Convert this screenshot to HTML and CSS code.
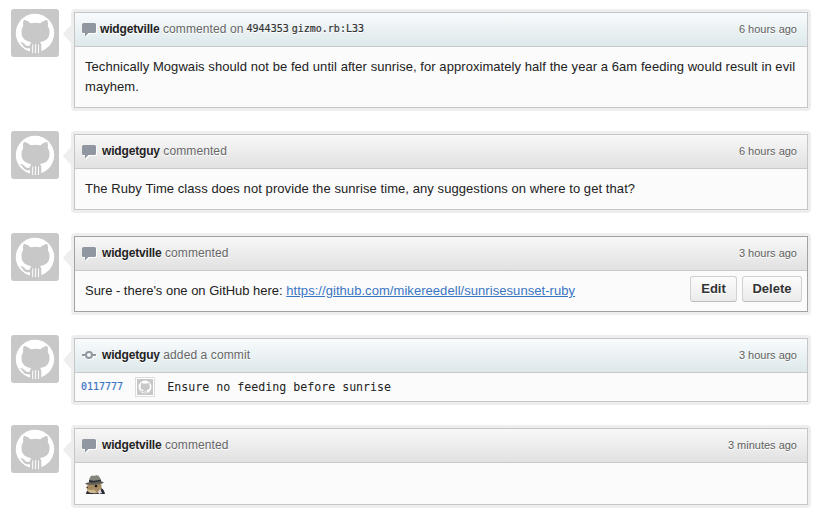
FILE: index.html
```
<!DOCTYPE html>
<html lang="en">
<head>
<meta charset="utf-8">
<title>Discussion</title>
<link rel="stylesheet" href="styles.css">
</head>
<body>
<svg class="defs" width="0" height="0" aria-hidden="true">
  <symbol id="cat" viewBox="0 0 48 48">
    <rect width="48" height="48" fill="#c8c8c8"/>
    <circle cx="24" cy="24" r="19.2" fill="#fff"/>
    <path fill="#c8c8c8" d="M12.500 11.500Q13 10.600 14 11q3 .8 5.700 3.200 4.800-1 9.600 0Q32 11.800 35 11q1-.4 1.500.5 1 3 .3 5.600Q38.500 19.500 38.500 23c0 6.500-3.700 9.200-9.500 10 1.200 1.200 1.300 2.600 1.300 4.200v6H19v-4c-3.700.6-5.700-.5-7-2.700-.8-1.500-1.900-2.500-3.400-3.100 2.500-.4 4 .5 5.300 2.200 1.300 1.500 2.900 1.700 5.100 1 .1-1.400.4-2.500 1.300-3.600C14.500 32.300 10.500 29.500 10.500 23q0-3.500 1.700-5.900-.7-2.600.3-5.600z"/>
    <path stroke="#fff" d="M21.700 35.500v8.500M24.600 35v9M27.500 35.500v8.500"/>
  </symbol>
  <symbol id="bubble" viewBox="0 0 14 14">
    <path fill="#9097a0" d="M1.500 0h11Q14 0 14 1.500v7q0 1.500-1.500 1.500H6.500L3 13.500V10H1.500Q0 10 0 8.500v-7Q0 0 1.500 0z"/>
  </symbol>
</svg>
<main class="thread">
  <article class="item">
    <svg class="avatar"><use href="#cat"/></svg>
    <div class="frame"><div class="box">
      <header class="head blue"><svg class="icon tight"><use href="#bubble"/></svg><b>widgetville</b><span class="action">commented on</span><code>4944353</code><code>gizmo.rb:L33</code><time>6 hours ago</time></header>
      <div class="body"><p>Technically Mogwais should not be fed until after sunrise, for approximately half the year a 6am feeding would result in evil<br>mayhem.</p></div>
    </div></div>
  </article>
  <article class="item">
    <svg class="avatar"><use href="#cat"/></svg>
    <div class="frame"><div class="box">
      <header class="head"><svg class="icon"><use href="#bubble"/></svg><b>widgetguy</b><span class="action">commented</span><time>6 hours ago</time></header>
      <div class="body"><p class="question">The Ruby Time class does not provide the sunrise time, any suggestions on where to get that?</p></div>
    </div></div>
  </article>
  <article class="item">
    <svg class="avatar"><use href="#cat"/></svg>
    <div class="frame"><div class="box active">
      <header class="head"><svg class="icon"><use href="#bubble"/></svg><b>widgetville</b><span class="action">commented</span><time>3 hours ago</time></header>
      <div class="body with-actions"><p>Sure - there's one on GitHub here: <a href="https://github.com/mikereedell/sunrisesunset-ruby">https://github.com/mikereedell/sunrisesunset-ruby</a></p>
        <div class="actions"><button class="edit">Edit</button><button class="delete">Delete</button></div>
      </div>
    </div></div>
  </article>
  <article class="item">
    <svg class="avatar"><use href="#cat"/></svg>
    <div class="frame"><div class="box">
      <header class="head blue"><svg class="icon" viewBox="0 0 14 14"><path d="M0 6h4M10 6h4" stroke="#9097a0" stroke-width="2"/><circle cx="7" cy="6" r="3" fill="none" stroke="#9097a0" stroke-width="2"/></svg><b>widgetguy</b><span class="action">added a commit</span><time>3 hours ago</time></header>
      <div class="commit"><a class="sha" href="#">0117777</a><svg class="mini"><use href="#cat"/></svg><span>Ensure no feeding before sunrise</span></div>
    </div></div>
  </article>
  <article class="item">
    <svg class="avatar"><use href="#cat"/></svg>
    <div class="frame"><div class="box">
      <header class="head"><svg class="icon"><use href="#bubble"/></svg><b>widgetville</b><span class="action">commented</span><time>3 minutes ago</time></header>
      <div class="body emoji-body">
        <svg class="emoji" viewBox="0 0 20 20">
          <path d="M1 19q0-3 3-4l12-2q3 1 4 6z" fill="#2c2b3a"/>
          <path d="M3 9.500q-2 2.500-1 5.500 3 3 7 3.500l5-.5q4-4 2-9.500L5 8z" fill="#a58a62"/>
          <path d="M2 14q4 1.500 7 .5l3 3.500H6q-4-1-4-4z" fill="#cdb990"/>
          <path d="M15 14l2 4-3 1-1-2z" fill="#dedae0"/>
          <circle cx="11" cy="11" r="1.300" fill="#151210"/>
          <circle cx="2.200" cy="12.500" r=".8" fill="#3e3028"/>
          <path d="M4 7q0-5.500 3-6.500 2 .6 4-.3Q15-.2 16 6z" fill="#85857d"/>
          <path d="M4 5q6 1.500 12-.5V7Q10 9.500 4 7.500z" fill="#2d2e31"/>
          <path d="M0 8.500q2-1 4-1.200 6 .7 12-1.300l3 1.500Q17 9 14 9.200 7 10 2 9.700z" fill="#60605a"/>
        </svg>
      </div>
    </div></div>
  </article>
</main>
</body>
</html>
```
FILE: styles.css
```
* { box-sizing: border-box; }
body { margin: 0; background: #fff; font: 13px/20px "Liberation Sans", Arial, sans-serif; color: #222; }
.defs { display: block; }
.thread { display: flex; flex-direction: column; gap: 20px; padding: 9px 8px 0 11px; }
.item { display: flex; align-items: flex-start; gap: 12px; }
.avatar { width: 48px; height: 48px; border-radius: 3px; flex: none; }
.frame { flex: 1; border: 3px solid #eee; border-radius: 4px; position: relative; }
.frame::before { content: ""; position: absolute; left: -11px; top: 13px; border: 9px solid transparent; border-right: 8px solid #eee; border-left: 0; }
.box { border: 1px solid #c6c6c8; background: #fbfbfb; }
.box.active { border-color: #a2a2a2; }
.head { display: flex; align-items: center; height: 34px; padding: 0 10px 2px 7px; border-bottom: 1px solid #c9c9cb; background: linear-gradient(#f8f8f8, #e1e1e1); font-size: 12px; text-shadow: 0 1px 0 #fff; white-space: nowrap; }
.head.blue { background: linear-gradient(#f8fbfc, #dde8eb); }
.icon { width: 14px; height: 14px; margin: 3px 6px 0 0; flex: none; filter: drop-shadow(1px 1px 0 #fff); }
.icon.tight { margin-right: 4px; }
.head b { color: #222; letter-spacing: -0.17px; }
.action { margin-left: 3.5px; color: #666; letter-spacing: 0.1px; }
.head code { margin-left: 3px; font: 10px/20px "DejaVu Sans Mono", monospace; color: #333; -webkit-text-stroke: 0.2px #333; }
time { margin-left: auto; font-size: 11px; color: #606060; }
.body { padding: 10px; }
.body p { margin: 0; white-space: nowrap; letter-spacing: 0.062px; }
.body .question { letter-spacing: 0.073px; }
a { color: #3a75c4; }
.body.with-actions { display: flex; justify-content: space-between; padding: 5px 5px 9px 10px; }
.body.with-actions p { padding-top: 5px; letter-spacing: -0.02px; }
.body.with-actions a { letter-spacing: 0.055px; }
.actions { display: flex; gap: 5px; }
button { height: 26px; padding: 0; border: 1px solid #d0d0d0; border-bottom-color: #bcbcbc; border-radius: 3px; background: linear-gradient(#fcfcfc, #ebebeb); color: #333; font: bold 13px/24px "Liberation Sans", Arial, sans-serif; text-shadow: 0 1px 0 #fff; }
.edit { width: 47px; }
.delete { width: 60px; }
.commit { display: flex; align-items: center; height: 28px; padding: 0 6px 1px; font: 11.63px/20px "DejaVu Sans Mono", monospace; color: #222; white-space: pre; }
.sha { font-size: 10px; text-decoration: none; -webkit-text-stroke: 0.2px #3a75c4; }
.mini { width: 20px; height: 20px; padding: 1px; margin: 0 12px; border: 1px solid #ddd; background: #fff; }
.body.emoji-body { height: 41px; padding-top: 12px; }
.emoji { display: block; width: 20px; height: 20px; }
```
